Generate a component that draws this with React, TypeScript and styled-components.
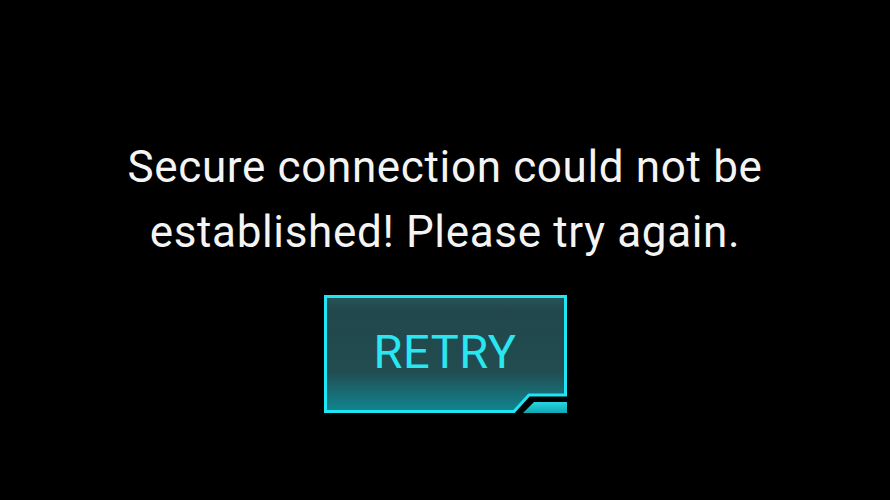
import styled, { createGlobalStyle } from 'styled-components';

const GlobalStyle = createGlobalStyle`
  html, body {
    margin: 0;
    padding: 0;
    background: #000;
  }
  #root {
    min-height: 100vh;
  }
`;

const Screen = styled.div`
  display: flex;
  flex-direction: column;
  align-items: center;
  width: 890px;
  height: 500px;
  padding-top: 135px;
  box-sizing: border-box;
  background: #000;
  font-family: Roboto, 'Liberation Sans', sans-serif;
`;

const Message = styled.p`
  margin: 0;
  color: #f4f4f4;
  font-size: 44px;
  line-height: 65px;
  letter-spacing: 0.65px;
  text-align: center;
  font-weight: 400;
`;

const RetryButton = styled.button`
  position: relative;
  margin-top: 30px;
  width: 243px;
  height: 118px;
  padding: 0 0 6px;
  border: none;
  background: transparent;
  cursor: pointer;
  color: #2ae6f0;
  font-family: inherit;
  font-size: 47px;
  letter-spacing: 0.5px;
`;

const Frame = styled.svg`
  position: absolute;
  inset: 0;
  width: 100%;
  height: 100%;
`;

const Label = styled.span`
  position: relative;
`;

const ButtonFrame = () => (
  <Frame viewBox="0 0 243 118">
    <defs>
      <linearGradient id="fill" x1="0" y1="0" x2="0" y2="1">
        <stop offset="0" stopColor="#27555a" />
        <stop offset="0.12" stopColor="#22484c" />
        <stop offset="0.65" stopColor="#214c50" />
        <stop offset="1" stopColor="#108791" />
      </linearGradient>
      <linearGradient id="tab" x1="0" y1="0" x2="0" y2="1">
        <stop offset="0" stopColor="#26d6e2" />
        <stop offset="1" stopColor="#10a7b2" />
      </linearGradient>
    </defs>
    <path
      d="M1.5 1.5 H241.5 V100 H205 L190 116.5 H1.5 Z"
      fill="url(#fill)"
      stroke="#1fe6f4"
      strokeWidth="3"
    />
    <path d="M199 118 L210 107 H243 V118 Z" fill="url(#tab)" />
  </Frame>
);

export default function App() {
  return (
    <>
      <GlobalStyle />
      <Screen>
        <Message>
          Secure connection could not be
          <br />
          established! Please try again.
        </Message>
        <RetryButton type="button">
          <ButtonFrame />
          <Label>RETRY</Label>
        </RetryButton>
      </Screen>
    </>
  );
}
